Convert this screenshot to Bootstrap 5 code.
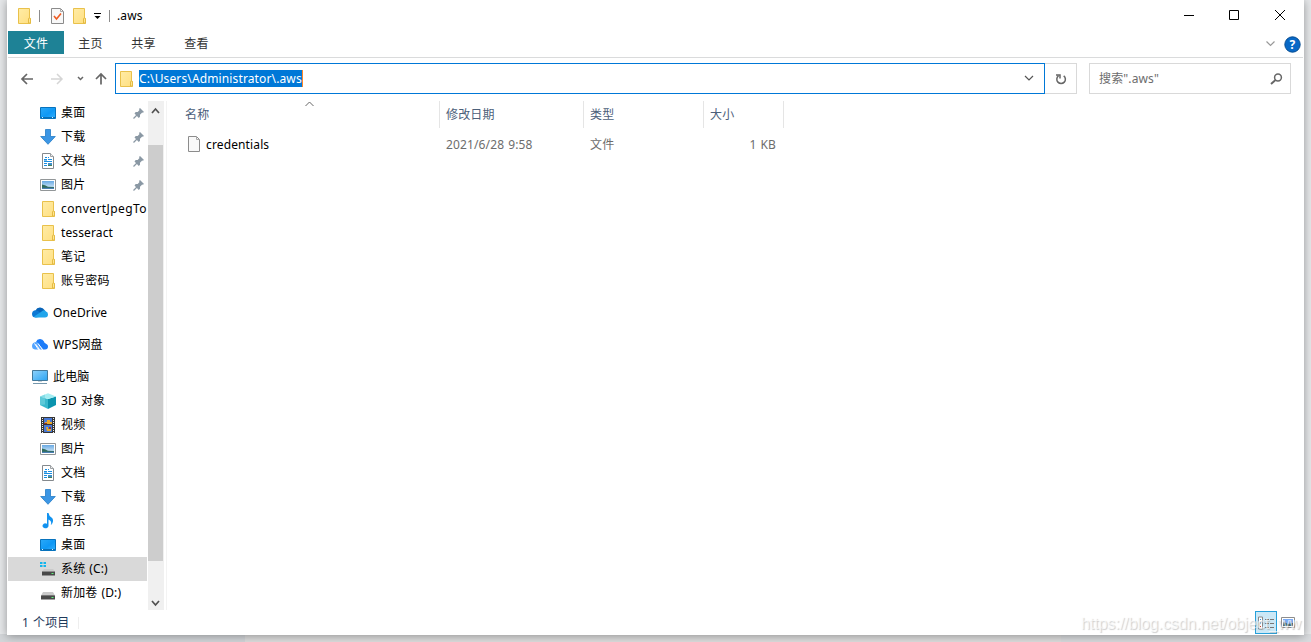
<!DOCTYPE html>
<html lang="zh-CN">
<head>
<meta charset="utf-8">
<meta name="viewport" content="width=device-width, initial-scale=1">
<title>.aws</title>
<link href="https://cdn.jsdelivr.net/npm/bootstrap@5.3.0/dist/css/bootstrap.min.css" rel="stylesheet">
<style>
  body { font: 12px/16px "Noto Sans", "Noto Sans CJK SC", sans-serif; letter-spacing: .13px; word-spacing: .8px; color: #000; height: 642px; overflow: hidden;
    background: linear-gradient(90deg, #d3d6d9 245px, #dedede 245px 1061px, #d9dbde 1061px) 0 100% / 100% 8px no-repeat, #e6e8ea; }
  svg { display: block; flex: none; }
  .explorer { width: 1297px; height: 635px; margin-left: 7px; padding: 0 1px; background: #fff; box-shadow: 0 1px 9px rgba(0,0,0,.36); }
  .titlebar { height: 31px; padding-left: 10px; }
  .vbar { width: 1px; height: 12px; background: #8c8c8c; }
  .ribbon { height: 27px; border-bottom: 1px solid #dadbdc; color: #333; }
  .ribbon .tab { height: 23px; width: 53px; line-height: 26px; text-align: center; }
  .ribbon .file { width: 56px; line-height: 25px; background: #1e8296; color: #fff; }
  .addressbar { height: 43px; padding: 5px 12px 0 11px; }
  .addr { width: 930px; height: 31px; border: 1px solid #0078d7; padding-left: 4px; }
  .picked { background: #0078d7; color: #fff; height: 17px; line-height: 17px; width: 164px; border-right: 1px solid #ff8728; white-space: nowrap; }
  .reload { width: 32px; height: 31px; border: 1px solid #d9d9d9; border-left: 0; }
  .find { width: 202px; height: 31px; border: 1px solid #d9d9d9; padding: 0 7px 0 9px; color: #6d6d6d; margin-left: 12px; }
  .panes { height: 509px; }
  .tree { width: 139px; overflow: hidden; }
  .node { height: 24px; padding-left: 32px; white-space: nowrap; position: relative; }
  .node svg { width: 16px; height: 16px; margin-right: 5px; }
  .node.top { margin-top: 8px; padding-left: 24px; }
  .node.on { background: #d9d9d9; }
  .node .pin { margin: 0 2px 0 auto; width: 12px; height: 12px; }
  .node.wide { letter-spacing: .42px; }
  .scroller { width: 16px; background: #f0f0f0; margin-left: 1px; }
  .thumb { height: 416px; width: 15px; background: #cdcdcd; }
  .files { border-left: 1px solid #f3f3f3; margin-left: 2px; padding-left: 12px; }
  .cols { display: grid; grid-template-columns: 261px 144px 120px 80px; }
  .heads { height: 27px; color: #4c607a; position: relative; }
  .heads > div { border-right: 1px solid #e5e5e5; padding-left: 6px; line-height: 27px; }
  .sorter { position: absolute; left: 126px; top: 0; }
  .entry { height: 33px; color: #6d6d6d; line-height: 33px; }
  .entry > div { padding-left: 6px; }
  .entry .fname { color: #000; padding-left: 8px; }
  .status { height: 25px; color: #1e395b; padding-left: 14px; padding-right: 4px; }
  .viewbtn { width: 22px; height: 23px; border: 1px solid #26a0da; background: #cbe8f6; margin-right: 4px; }
  .stamp { position: absolute; left: 1081px; top: 614px; font: 16px/20px "Liberation Sans", sans-serif; letter-spacing: -.08px; color: rgba(255,255,255,.65); text-shadow: 1px 1px 1px rgba(120,120,120,.36); white-space: nowrap; }
</style>
</head>
<body>
<svg width="0" height="0" class="position-absolute">
  <defs>
    <linearGradient id="gf" x2="1" y2="1"><stop stop-color="#ffeca6"/><stop offset="1" stop-color="#ffdf80"/></linearGradient>
    <linearGradient id="gd" x2="1" y2="1"><stop stop-color="#2aa9f8"/><stop offset=".55" stop-color="#0f98f5"/><stop offset="1" stop-color="#35b2ff"/></linearGradient>
    <linearGradient id="gp" x2="1" y2="1"><stop stop-color="#8ed2fb"/><stop offset="1" stop-color="#2ba4f3"/></linearGradient>
    <linearGradient id="gs" x2="0" y2="1"><stop stop-color="#68a9e3"/><stop offset="1" stop-color="#e3f2fb"/></linearGradient>
    <symbol id="folder" viewBox="0 0 16 16"><path d="M2.5.5h11v10h1v5h-12z" fill="url(#gf)" stroke="#e9c14b"/><path d="M12.5 15v-4q0-1 1-1t1 1v4z" fill="#ffe592" stroke="#e4bb43"/></symbol>
    <symbol id="desktop" viewBox="0 0 16 16"><path d="M.5 2.500h15v11H.5z" fill="url(#gd)" stroke="#0873bd"/><path d="M1 12.500h14" stroke="#0a6fb5"/><path d="M2 12.500h1m9 0h1" stroke="#d9f3ff"/></symbol>
    <symbol id="down" viewBox="0 0 16 16"><path d="M5.5.5h5v7h4.800L8 15.300.7 7.500h4.800z" fill="#3c96e4" stroke="#237cc8" stroke-width=".8"/></symbol>
    <symbol id="doc" viewBox="0 0 16 16"><path d="M2.500.5h8l3 3v12h-11z" fill="#fff" stroke="#84898d"/><path d="M10.500.5v3h3" fill="#eee" stroke="#9da1a4"/><path d="M5 4.500h2m1 0h1M4 6.500h3m1 0h4M4 8.500h8M4 10.500h3m-3 2h3" stroke="#1b8ee0"/><path d="M4 7h3v1H4z" fill="#7cc0ee"/><path d="M8 10h4v2H8z" fill="#3f8fc8"/><path d="M8 12.500h4" stroke="#447d5b"/></symbol>
    <symbol id="pic" viewBox="0 0 16 16"><path d="M.5 2.500h15v11H.5z" fill="#fff" stroke="#929698"/><path d="M2 4h12v8H2z" fill="url(#gs)"/><path d="M2 7.500l3 .8 3 1.500 6 .2v1H2z" fill="#306b5d"/><path d="M2 10.800h12V12H2z" fill="#4a7fb4"/></symbol>
    <symbol id="cloud" viewBox="0 1 16 16"><path d="M3.500 6.500A5 5 0 0 1 12.500 6L14 9l-9 4z" fill="#0864b8"/><path d="M0 10a3.700 3.700 0 0 1 6-3l7 5-9 1.500A3.700 3.700 0 0 1 0 10" fill="#0c78d4"/><path d="M2 12.500 9 8q3-3 5-.5 2 .7 2 3 0 3-3 3H3.500z" fill="#21a5eb"/></symbol>
    <symbol id="wps" viewBox="0 1 16 16"><path d="M4 6a4.300 4.300 0 0 1 8-.5c0 2 4 2 4 5q0 3-3 3h-2L5 7z" fill="#1d7cf8"/><path d="M0 10q0-3.500 4-4 2 0 3 2l3 5.500H8L4.500 8.500 3 8q3 3 3.500 5.500H3Q0 13 0 10" fill="#54a4ff"/><path d="m2.500 7.500 4 6M6 7.500l4.500 6" stroke="#fff"/></symbol>
    <symbol id="pc" viewBox="0 0 16 16"><path d="M.5 1.500h15v10H.5z" fill="url(#gp)" stroke="#43799b"/><path d="M6 12h4v1H6z" fill="#c6d2da"/><path d="M1 14.500h14" stroke="#7597ac"/></symbol>
    <symbol id="cube" viewBox="0 0 16 16"><path d="M0 3.500 8 6v10l-8-4z" fill="#38b8cc"/><path d="m16 3.500-8 2.500v10l8-4z" fill="#0b94ae"/><path d="m0 3.500 8-3.200 8 3.200L8 6z" fill="#a4edf2"/><path d="m0 3.500 5-2v10L0 12z" fill="#72d3df" opacity=".65"/></symbol>
    <symbol id="film" viewBox="0 0 16 16"><path d="M1 0h14v16H1z" fill="#363636"/><path d="M4 1h8v6H4zM4 8h8v7H4z" fill="#4879d6"/><path d="M2.500 1v15M13.500 1v15" stroke="#eee" stroke-dasharray="1 1"/><path d="M5 5h2V3h3v2h2v2H5zM6 10h2v2h3v2H7z" fill="#e7a82d"/><path d="M4 6h3v1H4zm5 4h2v2H9z" fill="#8f342d"/></symbol>
    <symbol id="note" viewBox="0 0 16 16"><path d="M7 0h1.500q.5 3 3 4.500 2.500 2 1 5.500-.7 1.500-1.700 2 1.500-4-2.300-5.500V13a3 2.500 0 1 1-1.500-2.300z" fill="#1192ef"/></symbol>
    <symbol id="drive" viewBox="0 0 16 16"><path d="M3 7h10l2 3.500H1z" fill="#cacaca"/><path d="M1 10.500h14v4H1z" fill="#494949"/><path d="M1.500 10.500h13" stroke="#777"/><path d="M11.500 12.500h2" stroke="#5ff27b"/></symbol>
    <symbol id="osdrive" viewBox="0 0 16 16"><path d="M0 1h2.500v2H0zM3.500 1H6v2H3.500zM0 4h2.500v2H0zM3.500 4H6v2H3.500z" fill="#13b5ed"/><path d="M4 8h9l2 2.500H2z" fill="#cacaca"/><path d="M2 10.500h13v4H2z" fill="#494949"/><path d="M11.500 12.500h2" stroke="#5ff27b"/></symbol>
    <symbol id="pin" viewBox="0 0 12 12"><path d="m7 1 4 4-1.200.7-.6-.2-2.200 2.200v2L5.800 11 1.500 6.500 2.700 5h2L6.500 3 6 2z" fill="#8a98a4"/><path d="m4 8-3.500 3.500" stroke="#8a98a4" stroke-width="1.200"/></symbol>
  </defs>
</svg>

<main class="explorer d-flex flex-column">
  <header class="titlebar d-flex align-items-center">
    <svg width="16" height="16" style="margin-left:-2px"><use href="#folder"/></svg>
    <span class="vbar" style="margin-left:7px"></span>
    <svg width="13" height="16" viewBox="0 0 13 16" style="margin-left:11px"><path d="M.5.5h9l3 3v12H.5z" fill="#f8f8f8" stroke="#8b8b8b"/><path d="M9.500.5v3h3" fill="none" stroke="#aaa"/><path d="m3 8 2.500 3L10 5.500" fill="none" stroke="#ee5b22" stroke-width="1.600"/></svg>
    <svg width="16" height="16" style="margin-left:7px"><use href="#folder"/></svg>
    <svg width="7" height="7" viewBox="0 0 7 7" style="margin:2px 0 0 7px"><path d="M0 .5h7" stroke="#000"/><path d="M.5 3h6l-3 3z"/></svg>
    <span class="vbar" style="margin-left:8px"></span>
    <span style="margin-left:7px">.aws</span>
    <svg class="ms-auto" width="102" height="12" viewBox="0 0 102 12" style="margin:-1px 17px 0 0" fill="none" stroke="#000"><path d="M0 6.500h10M45.500 1.500h9v9h-9zM91 1l10 10m0-10L91 11"/></svg>
  </header>

  <nav class="ribbon d-flex">
    <span class="tab file">文件</span><span class="tab">主页</span><span class="tab">共享</span><span class="tab">查看</span>
    <div class="ms-auto d-flex align-items-center" style="margin-right:2px">
      <svg width="9" height="6" viewBox="0 0 9 6" class="me-2"><path d="m.5.500 4 4 4-4" fill="none" stroke="#999" stroke-width="1.200"/></svg>
      <svg width="17" height="17" viewBox="0 0 17 17" style="margin-left:1px"><circle cx="8.500" cy="8.500" r="7.700" fill="#0868c6" stroke="#064c91"/><text x="8.500" y="13" text-anchor="middle" fill="#fff" font-family="Noto Sans" font-size="12" font-weight="bold">?</text></svg>
    </div>
  </nav>

  <section class="addressbar d-flex">
    <svg width="96" height="31" viewBox="0 0 96 31" fill="none">
      <path d="M14 16H3m5-5-5 5 5 5" stroke="#666" stroke-width="1.700"/>
      <path d="M32 16h11m-5-5 5 5-5 5" stroke="#d5d5d5" stroke-width="1.500"/>
      <path d="m59 14 2.500 2.500L64 14" stroke="#666" stroke-width="1.500"/>
      <path d="M82 21.500V11m-5 5 5-5 5 5" stroke="#666" stroke-width="1.700"/>
    </svg>
    <div class="addr d-flex align-items-center">
      <svg width="16" height="16" style="margin:0 5px 0 -2px"><use href="#folder"/></svg>
      <span class="picked">C:\Users\Administrator\.aws</span>
      <svg class="ms-auto" width="10" height="7" viewBox="0 0 10 7" style="margin-right:10px"><path d="m1 1 4 4 4-4" fill="none" stroke="#555" stroke-width="1.200"/></svg>
    </div>
    <div class="reload d-flex align-items-center justify-content-center">
      <svg width="12" height="12" viewBox="0 0 12 12" fill="none" stroke="#666" stroke-width="1.500"><path d="M8.700 2.800A4.300 4.300 0 1 1 3.500 2.800M5 5.500V2H1"/></svg>
    </div>
    <div class="find d-flex align-items-center">
      <span>搜索".aws"</span>
      <svg class="ms-auto" width="13" height="12" viewBox="0 0 13 12" fill="none" stroke="#666"><circle cx="8" cy="4.500" r="3.400" stroke-width="1.500"/><path d="M5.500 7 1 11" stroke-width="1.900"/></svg>
    </div>
  </section>

  <section class="panes d-flex">
    <aside class="tree">
      <div class="node d-flex align-items-center"><svg><use href="#desktop"/></svg>桌面<svg class="pin"><use href="#pin"/></svg></div>
      <div class="node d-flex align-items-center"><svg><use href="#down"/></svg>下载<svg class="pin"><use href="#pin"/></svg></div>
      <div class="node d-flex align-items-center"><svg><use href="#doc"/></svg>文档<svg class="pin"><use href="#pin"/></svg></div>
      <div class="node d-flex align-items-center"><svg><use href="#pic"/></svg>图片<svg class="pin"><use href="#pin"/></svg></div>
      <div class="node wide d-flex align-items-center"><svg><use href="#folder"/></svg>convertJpegTo</div>
      <div class="node d-flex align-items-center"><svg><use href="#folder"/></svg>tesseract</div>
      <div class="node d-flex align-items-center"><svg><use href="#folder"/></svg>笔记</div>
      <div class="node d-flex align-items-center"><svg><use href="#folder"/></svg>账号密码</div>
      <div class="node top d-flex align-items-center"><svg><use href="#cloud"/></svg>OneDrive</div>
      <div class="node top d-flex align-items-center"><svg><use href="#wps"/></svg>WPS网盘</div>
      <div class="node top d-flex align-items-center"><svg><use href="#pc"/></svg>此电脑</div>
      <div class="node d-flex align-items-center"><svg><use href="#cube"/></svg>3D 对象</div>
      <div class="node d-flex align-items-center"><svg><use href="#film"/></svg>视频</div>
      <div class="node d-flex align-items-center"><svg><use href="#pic"/></svg>图片</div>
      <div class="node d-flex align-items-center"><svg><use href="#doc"/></svg>文档</div>
      <div class="node d-flex align-items-center"><svg><use href="#down"/></svg>下载</div>
      <div class="node d-flex align-items-center"><svg><use href="#note"/></svg>音乐</div>
      <div class="node d-flex align-items-center"><svg><use href="#desktop"/></svg>桌面</div>
      <div class="node on d-flex align-items-center"><svg><use href="#osdrive"/></svg>系统 (C:)</div>
      <div class="node d-flex align-items-center"><svg><use href="#drive"/></svg>新加卷 (D:)</div>
    </aside>
    <div class="scroller d-flex flex-column">
      <svg width="16" height="44" viewBox="0 0 16 44"><path d="m4 12 3.500-4L11 12" fill="none" stroke="#505050" stroke-width="1.700"/></svg>
      <div class="thumb"></div>
      <svg class="mt-auto" width="16" height="16" viewBox="0 0 16 16"><path d="m4 7 3.500 4L11 7" fill="none" stroke="#505050" stroke-width="1.700"/></svg>
    </div>
    <div class="files flex-grow-1">
      <div class="cols heads">
        <div>名称</div><div>修改日期</div><div>类型</div><div>大小</div>
        <svg class="sorter" width="9" height="6" viewBox="0 0 9 6"><path d="m.5 5 4-4 4 4" fill="none" stroke="#666"/></svg>
      </div>
      <div class="cols entry">
        <div class="fname d-flex align-items-center"><svg width="13" height="16" viewBox="0 0 13 16" style="margin:-2px 5px 0 1px"><path d="M.5.5h8l3 3v12H.5z" fill="#f9f9f9" stroke="#8c8c8c"/><path d="M8.500.5v3h3" fill="none" stroke="#aaa"/></svg>credentials</div>
        <div>2021/6/28 9:58</div><div>文件</div><div class="text-end pe-2">1 KB</div>
      </div>
    </div>
  </section>

  <footer class="status d-flex align-items-center">
    <span>1 个项目</span><span class="vbar" style="margin-left:9px;background:#eee"></span>
    <div class="viewbtn ms-auto d-flex align-items-center justify-content-center">
      <svg width="17" height="14" viewBox="0 0 17 14"><path d="M.5 1h4v12h-4z" fill="#fff" stroke="#888"/><path d="M2 3.500h1M2 7h1" stroke="#2a8cd4"/><path d="M2 10.500h1" stroke="#d23a2a"/><path d="M7 3.500h4m1 0h4M7 7.500h4m1 0h4M7 11.500h4m1 0h4" stroke="#777"/></svg>
    </div>
    <svg width="14" height="12" viewBox="0 0 14 12" style="margin-right:4px"><path d="M.5.500h13v10H.5z" fill="#fff" stroke="#8d8d8d"/><path d="M2 2h10v7H2z" fill="#78aaf5"/><path d="m2 5 3 1 2 1 5-1v3H2z" fill="#35606d"/></svg>
  </footer>
</main>
<div class="stamp">https://blog.csdn.net/object_ww</div>
<script src="https://cdn.jsdelivr.net/npm/bootstrap@5.3.0/dist/js/bootstrap.bundle.min.js"></script>
</body>
</html>
